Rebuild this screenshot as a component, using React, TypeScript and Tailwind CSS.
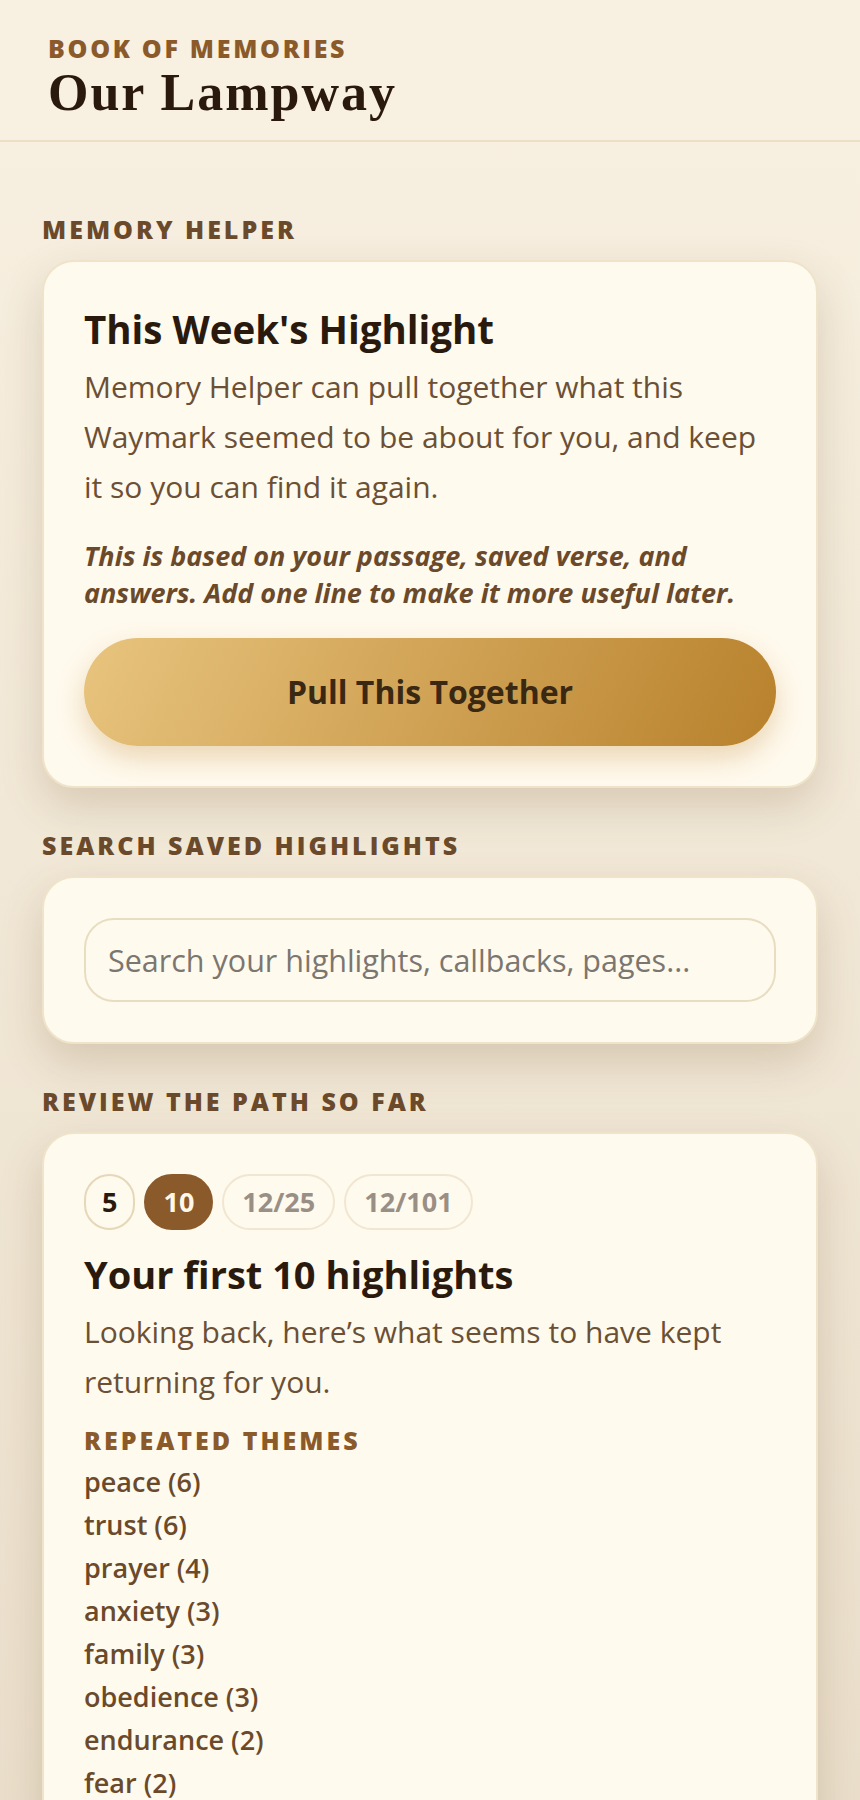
import React from 'react';

const sans = "font-['Open_Sans','Noto_Sans',sans-serif]";

const themes = [
  'peace (6)',
  'trust (6)',
  'prayer (4)',
  'anxiety (3)',
  'family (3)',
  'obedience (3)',
  'endurance (2)',
  'fear (2)',
  'rest (2)',
  'hope (1)',
];

const chips = [
  { label: '5', state: 'idle' },
  { label: '10', state: 'active' },
  { label: '12/25', state: 'locked' },
  { label: '12/101', state: 'locked' },
];

function SectionLabel({ children }: { children: React.ReactNode }) {
  return (
    <h2 className="mb-[17px] text-[25px] leading-[28px] font-extrabold tracking-[0.12em] text-[#6b4a2b] uppercase">
      {children}
    </h2>
  );
}

function Card({ children }: { children: React.ReactNode }) {
  return (
    <div className="rounded-[32px] border-2 border-[#efe3c9] bg-[#fffaee] p-10 shadow-[0_18px_44px_rgba(110,80,40,0.2)]">
      {children}
    </div>
  );
}

function HighlightCard() {
  return (
    <Card>
      <h3 className="mt-[2.5px] text-[38.5px] leading-[48px] font-bold text-[#2a1a0e]">
        This Week's Highlight
      </h3>
      <p className="mt-[9px] text-[30px] leading-[50px] text-[#6b5035]">
        Memory Helper can pull together what this Waymark seemed to be about for you, and keep it so
        you can find it again.
      </p>
      <p className="mt-[25px] text-[27px] leading-[37px] font-bold text-[#6b4a2b] italic">
        This is based on your passage, saved verse, and answers. Add one line to make it more useful
        later.
      </p>
      <button
        type="button"
        className="mt-[27.5px] flex h-[108px] w-full items-center justify-center rounded-full bg-[linear-gradient(115deg,#e8c47e,#b8812c)] text-[32px] font-bold text-[#3a2812] shadow-[0_12px_28px_rgba(184,130,44,0.3)]"
      >
        Pull This Together
      </button>
    </Card>
  );
}

function SearchCard() {
  return (
    <Card>
      <input
        type="text"
        placeholder="Search your highlights, callbacks, pages..."
        className="block h-[84px] w-full rounded-[30px] border-2 border-[#e9ddc1] bg-[#fffaee] px-[22px] text-[30.5px] text-[#2a1a0e] outline-none placeholder:text-[#7b7670]"
      />
    </Card>
  );
}

function ReviewCard() {
  return (
    <Card>
      <div className="flex gap-[9px]">
        {chips.map((chip) => (
          <span
            key={chip.label}
            className={
              chip.state === 'active'
                ? 'flex h-14 items-center rounded-full border-2 border-[#8b5a2b] bg-[#8b5a2b] px-[17px] text-[27px] font-bold text-[#fff8ea]'
                : chip.state === 'idle'
                  ? 'flex h-14 items-center rounded-full border-2 border-[#e6d7b9] px-[16px] text-[27px] font-bold text-[#2a1a0e]'
                  : 'flex h-14 items-center rounded-full border-2 border-[#f1e6d1] px-[18px] text-[27px] font-bold text-[#9a8f84]'
            }
          >
            {chip.label}
          </span>
        ))}
      </div>
      <h3 className="mt-[21px] text-[38px] leading-[46px] font-bold text-[#2a1a0e]">
        Your first 10 highlights
      </h3>
      <p className="mt-[10px] text-[30px] leading-[50px] text-[#6b5035]">
        Looking back, here’s what seems to have kept returning for you.
      </p>
      <h4 className="mt-[19px] text-[25px] leading-[28px] font-extrabold tracking-[0.12em] text-[#8b5a2b] uppercase">
        Repeated Themes
      </h4>
      <ul className="mt-[6px]">
        {themes.map((t) => (
          <li key={t} className="text-[27px] leading-[43px] font-semibold text-[#6b4a2b]">
            {t}
          </li>
        ))}
      </ul>
    </Card>
  );
}

export default function App() {
  return (
    <div className={`${sans} min-h-screen bg-gradient-to-b from-[#f8f0e1] to-[#e9ddc9]`}>
      <header className="border-b-2 border-[#ebdfc6] bg-[#f8f0e1] px-12 pt-[33px] pb-[19px]">
        <p className="text-[25px] leading-[30px] font-extrabold tracking-[0.108em] text-[#8b5a2b] uppercase">
          Book of Memories
        </p>
        <h1 className="mt-[2px] font-['Liberation_Serif',serif] text-[52px] leading-[56px] font-bold tracking-[2px] text-[#2a1a0e]">
          Our Lampway
        </h1>
      </header>
      <main className="flex flex-col gap-[43px] px-[42px] pt-[73px] pb-16">
        <section>
          <SectionLabel>Memory Helper</SectionLabel>
          <HighlightCard />
        </section>
        <section>
          <SectionLabel>Search Saved Highlights</SectionLabel>
          <SearchCard />
        </section>
        <section>
          <SectionLabel>Review the Path So Far</SectionLabel>
          <ReviewCard />
        </section>
      </main>
    </div>
  );
}
